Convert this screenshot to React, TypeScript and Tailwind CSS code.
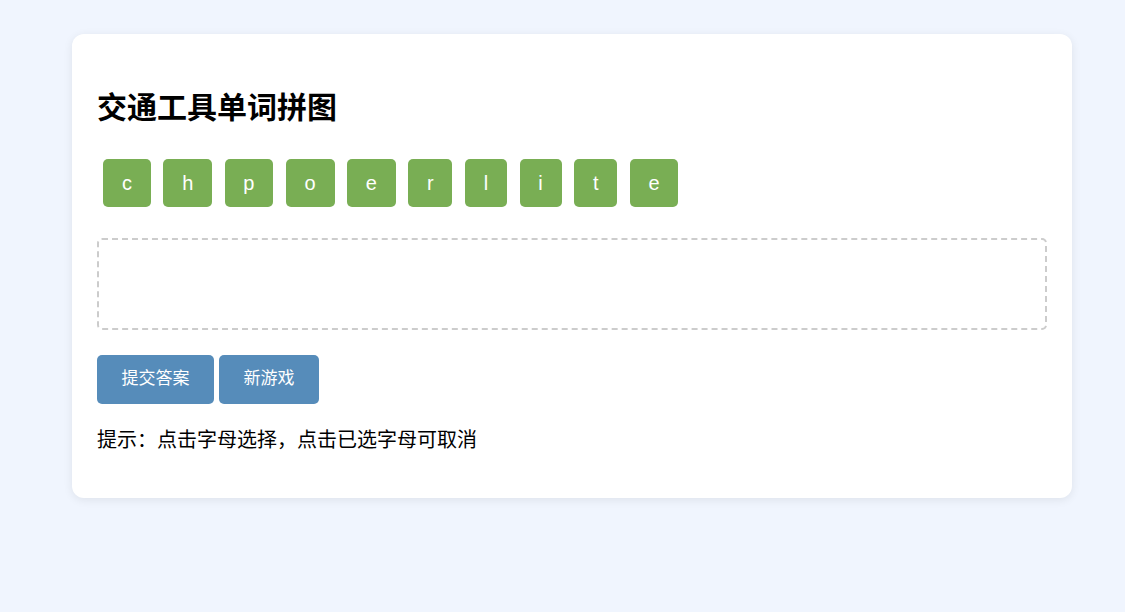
const letters = ['c', 'h', 'p', 'o', 'e', 'r', 'l', 'i', 't', 'e'];

const App = () => {
  return (
    <div className="min-h-[612px] bg-[#f0f5fe] pt-[34px] font-['Liberation_Sans','Noto_Sans_CJK_SC',sans-serif]">
      <div className="ml-[72px] w-[1000px] rounded-xl bg-white px-[25px] pt-[56px] pb-[43px] shadow-[0_2px_10px_rgba(0,0,0,0.08)]">
        <h2 className="text-[30px] font-bold leading-[36px] text-black">交通工具单词拼图</h2>

        <div className="mt-[33px] flex">
          {letters.map((l, i) => (
            <button
              key={i}
              className="mx-[6.25px] flex h-[47.5px] items-center rounded-[5px] bg-[#79ae54] px-[18.8px] text-[20px] text-white"
            >
              {l}
            </button>
          ))}
        </div>

        <div className="mt-[31.5px] h-[92px] rounded-[5px] border-2 border-dashed border-[#cccccc]"></div>

        <div className="mt-[24.5px] flex gap-[5px]">
          <button className="h-[49px] rounded-[5px] bg-[#568cba] px-[24.5px] text-[17px] text-white">提交答案</button>
          <button className="h-[49px] rounded-[5px] bg-[#568cba] px-[24.5px] text-[17px] text-white">新游戏</button>
        </div>

        <p className="mt-[21px] text-[20px] leading-[30px] text-black">提示：点击字母选择，点击已选字母可取消</p>
      </div>
    </div>
  );
};

export default App;
